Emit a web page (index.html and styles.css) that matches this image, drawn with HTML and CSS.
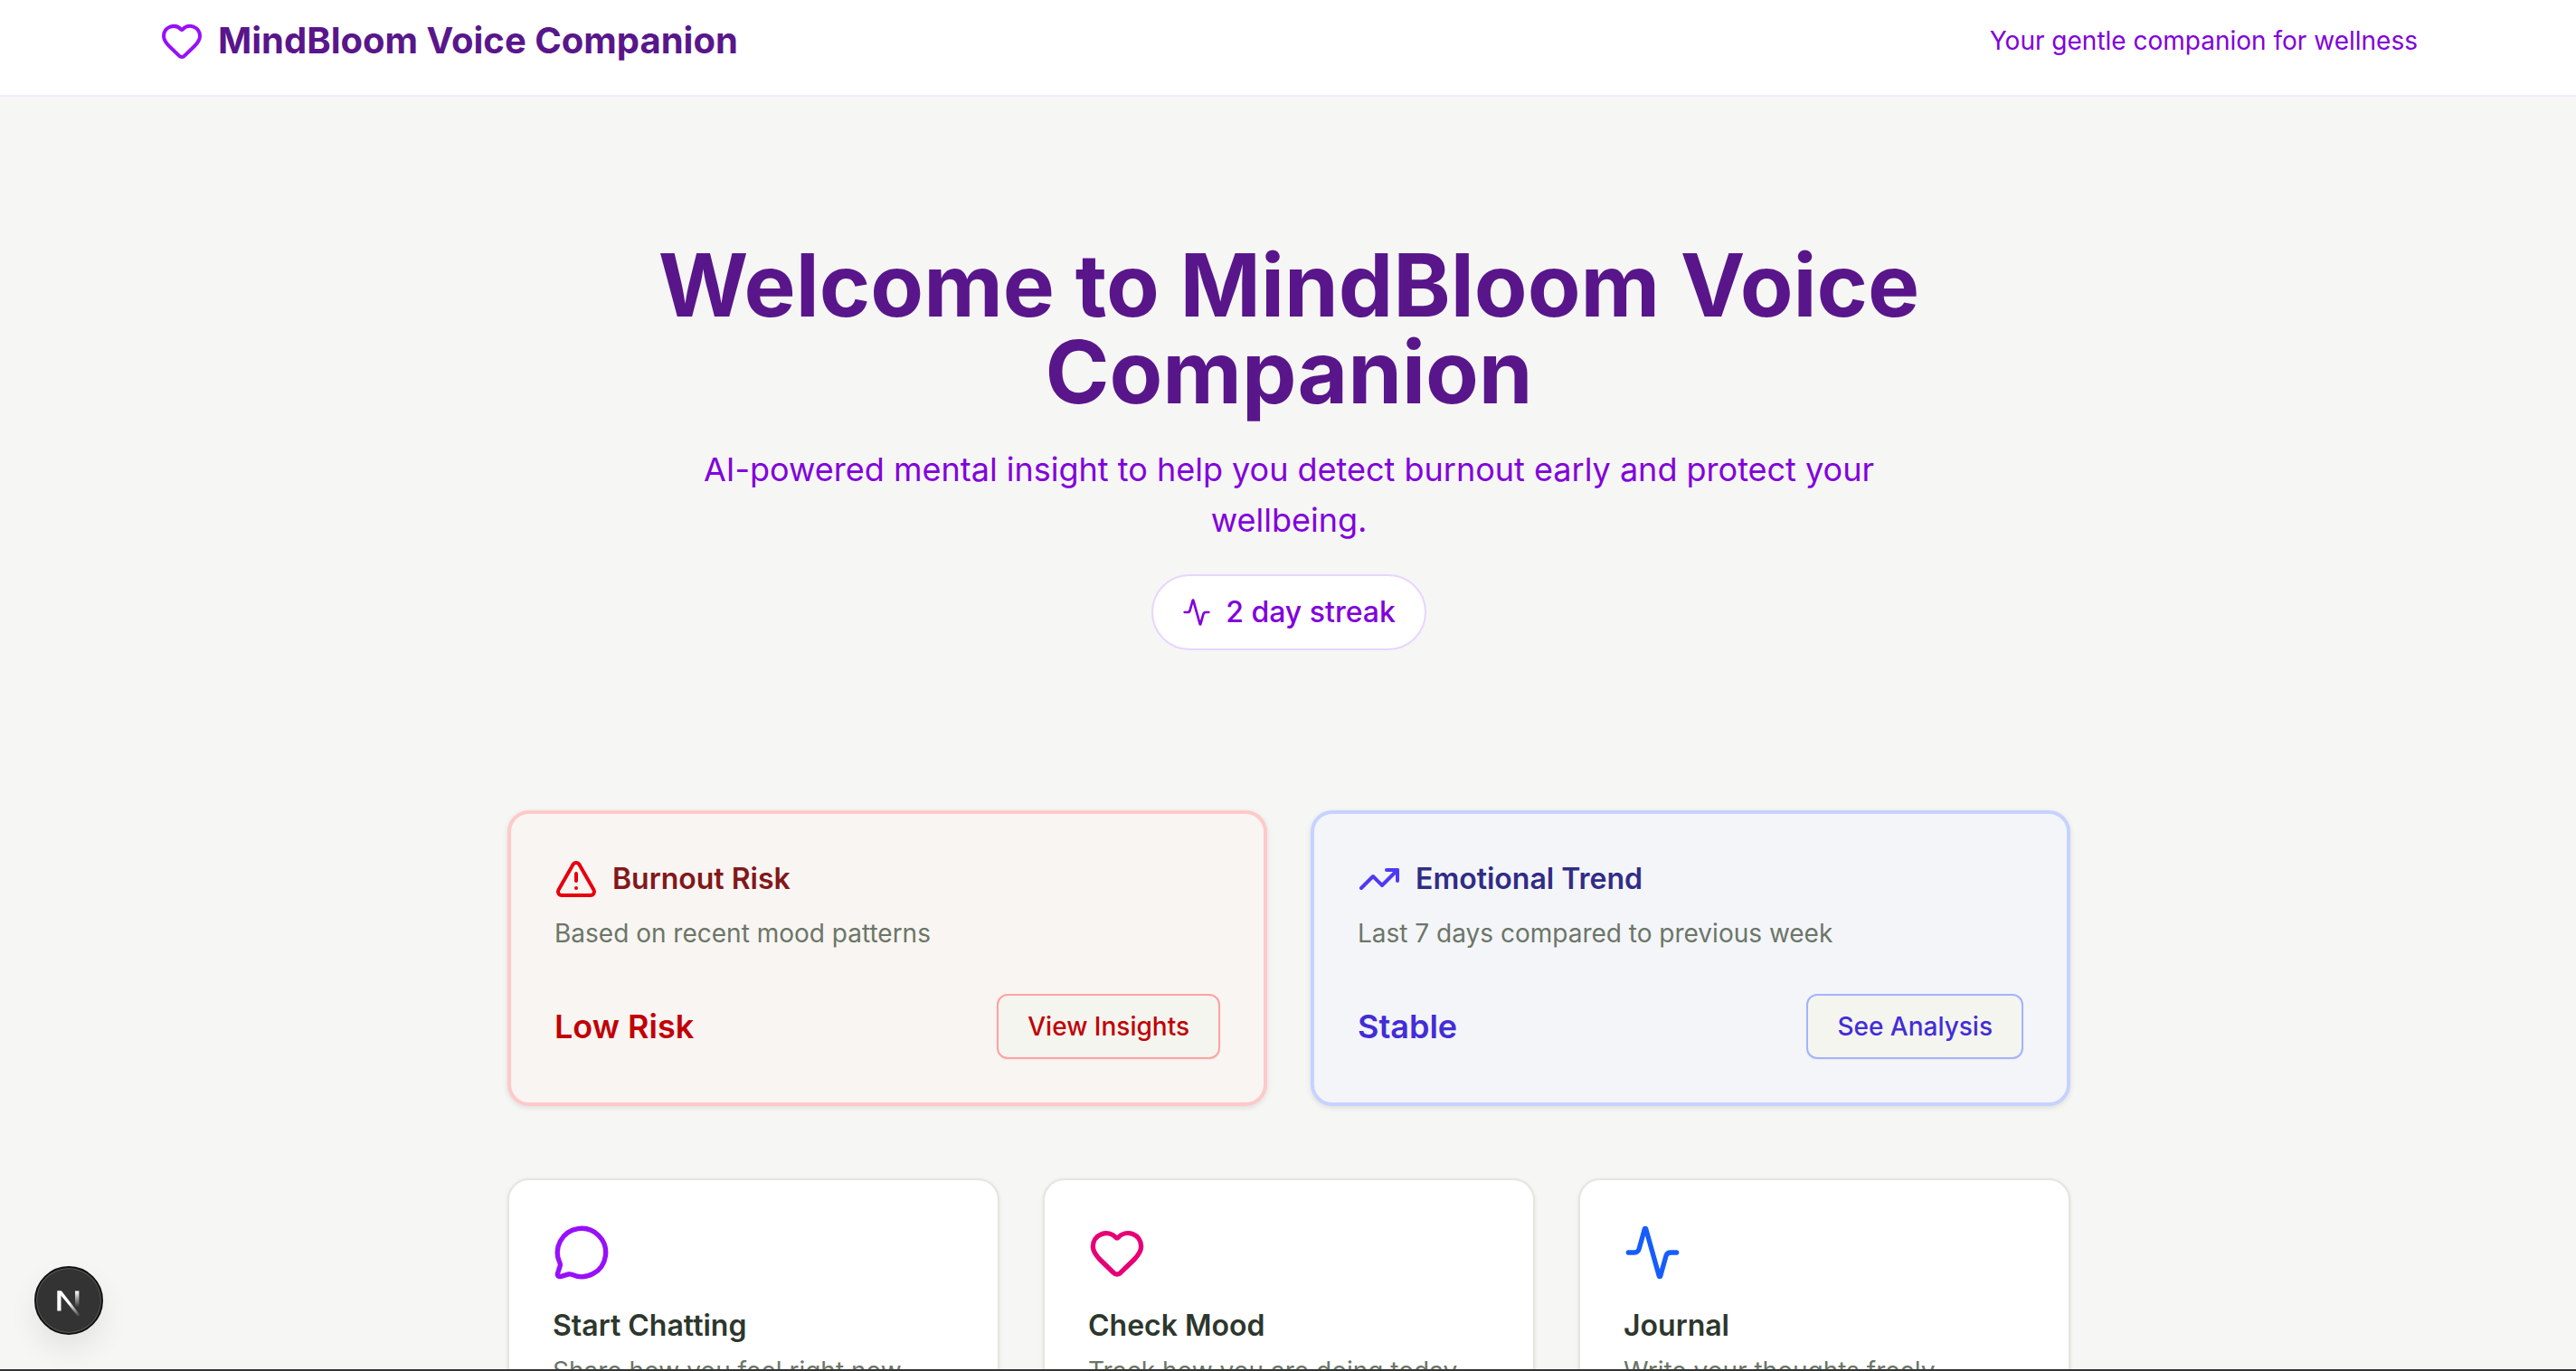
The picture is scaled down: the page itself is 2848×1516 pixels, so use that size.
FILE: index.html
```html
<!DOCTYPE html>
<html lang="en">
<head>
    <meta charset="UTF-8">
    <meta name="viewport" content="width=device-width, initial-scale=1.0">
    <title>MindBloom Voice Companion</title>
    <link rel="stylesheet" href="styles.css">
</head>
<body>
    <!-- Top bar -->
    <header class="topbar">
        <div class="topbar-inner">
            <div class="brand">
                <svg class="icon brand-icon" viewBox="0 0 24 24"><path d="M2 9.5a5.5 5.5 0 0 1 9.591-3.676.56.56 0 0 0 .818 0A5.49 5.49 0 0 1 22 9.5c0 2.29-1.5 4-3 5.5l-5.492 5.313a2 2 0 0 1-3 .019L5 15c-1.5-1.5-3-3.2-3-5.5"/></svg>
                <span class="brand-name">MindBloom Voice Companion</span>
            </div>
            <p class="tagline">Your gentle companion for wellness</p>
        </div>
    </header>

    <main class="page">
        <!-- Welcome section -->
        <section class="hero">
            <h1>Welcome to MindBloom Voice Companion</h1>
            <p class="hero-text">AI-powered mental insight to help you detect burnout early and protect your wellbeing.</p>
            <div class="streak">
                <svg class="icon streak-icon" viewBox="0 0 24 24"><path d="M22 12h-2.48a2 2 0 0 0-1.93 1.46l-2.35 8.36a.25.25 0 0 1-.48 0L9.24 2.18a.25.25 0 0 0-.48 0l-2.35 8.36A2 2 0 0 1 4.49 12H2"/></svg>
                <span>2 day streak</span>
            </div>
        </section>

        <!-- Insight cards -->
        <section class="insights">
            <div class="insight insight-red">
                <div class="insight-head">
                    <svg class="icon insight-icon" viewBox="0 0 24 24"><path d="m21.73 18-8-14a2 2 0 0 0-3.48 0l-8 14A2 2 0 0 0 4 21h16a2 2 0 0 0 1.73-3"/><path d="M12 9v4"/><path d="M12 17h.01"/></svg>
                    <h2>Burnout Risk</h2>
                </div>
                <p class="insight-text">Based on recent mood patterns</p>
                <div class="insight-foot">
                    <span class="insight-value">Low Risk</span>
                    <button class="insight-button">View Insights</button>
                </div>
            </div>
            <div class="insight insight-indigo">
                <div class="insight-head">
                    <svg class="icon insight-icon" viewBox="0 0 24 24"><path d="M16 7h6v6"/><path d="m22 7-8.5 8.5-5-5L2 17"/></svg>
                    <h2>Emotional Trend</h2>
                </div>
                <p class="insight-text">Last 7 days compared to previous week</p>
                <div class="insight-foot">
                    <span class="insight-value">Stable</span>
                    <button class="insight-button">See Analysis</button>
                </div>
            </div>
        </section>

        <!-- Action cards -->
        <section class="actions">
            <div class="action">
                <svg class="icon action-icon icon-purple" viewBox="0 0 24 24"><path d="M2.992 16.342a2 2 0 0 1 .094 1.167l-1.065 3.29a1 1 0 0 0 1.236 1.168l3.413-.998a2 2 0 0 1 1.099.092 10 10 0 1 0-4.777-4.719"/></svg>
                <h3>Start Chatting</h3>
                <p>Share how you feel right now</p>
            </div>
            <div class="action">
                <svg class="icon action-icon icon-pink" viewBox="0 0 24 24"><path d="M2 9.5a5.5 5.5 0 0 1 9.591-3.676.56.56 0 0 0 .818 0A5.49 5.49 0 0 1 22 9.5c0 2.29-1.5 4-3 5.5l-5.492 5.313a2 2 0 0 1-3 .019L5 15c-1.5-1.5-3-3.2-3-5.5"/></svg>
                <h3>Check Mood</h3>
                <p>Track how you are doing today</p>
            </div>
            <div class="action">
                <svg class="icon action-icon icon-blue" viewBox="0 0 24 24"><path d="M22 12h-2.48a2 2 0 0 0-1.93 1.46l-2.35 8.36a.25.25 0 0 1-.48 0L9.24 2.18a.25.25 0 0 0-.48 0l-2.35 8.36A2 2 0 0 1 4.49 12H2"/></svg>
                <h3>Journal</h3>
                <p>Write your thoughts freely</p>
            </div>
        </section>
    </main>

    <!-- Dev indicator, sits over the page -->
    <div class="dev-badge">
        <svg class="dev-logo" viewBox="0 0 32 32" width="32" height="32">
            <defs>
                <linearGradient id="nFade" x1="0" y1="0" x2="1" y2="1">
                    <stop offset="0.5" stop-color="#fff"/>
                    <stop offset="1" stop-color="#fff" stop-opacity="0"/>
                </linearGradient>
                <linearGradient id="nBar" x1="0" y1="0" x2="0" y2="1">
                    <stop offset="0" stop-color="#fff"/>
                    <stop offset="0.85" stop-color="#fff" stop-opacity="0"/>
                </linearGradient>
            </defs>
            <rect x="3.3" y="5.5" width="4.2" height="22" fill="#fff"/>
            <path d="M3.3 5.5H8L28.5 32 26.5 34Z" fill="url(#nFade)"/>
            <rect x="23" y="5.5" width="4.4" height="21" fill="url(#nBar)"/>
        </svg>
    </div>
    <div class="window-edge"></div>
</body>
</html>
```

FILE: styles.css
```css
html, body {
    height: 100%;
}

body {
    margin: 0;
    padding-left: 2px;
    overflow: hidden;
    background-color: #f6f6f4;
    font-family: Inter, "Liberation Sans", sans-serif;
}

h1, h2, h3, p {
    margin: 0;
}

.icon {
    display: block;
    flex-shrink: 0;
    fill: none;
    stroke: currentColor;
    stroke-width: 2;
    stroke-linecap: round;
    stroke-linejoin: round;
}

/* Top bar */
.topbar {
    margin-left: -2px;
    padding-left: 2px;
    background-color: #ffffff;
    border-bottom: 2px solid #f3e8ff;
}

.topbar-inner {
    max-width: 2560px;
    margin: 0 auto;
    padding: 17px 32px 32px;
    display: flex;
    align-items: center;
    justify-content: space-between;
    box-sizing: border-box;
}

.brand {
    display: flex;
    align-items: center;
    gap: 16px;
}

.brand-icon {
    width: 48px;
    height: 48px;
    color: #9810fa;
}

.brand-name {
    font-size: 40px;
    line-height: 56px;
    font-weight: 700;
    color: #59168b;
}

.tagline {
    font-size: 28px;
    line-height: 40px;
    color: #8200db;
}

/* Page column */
.page {
    max-width: 1792px;
    margin: 0 auto;
    padding: 160px 32px 0;
    box-sizing: border-box;
}

/* Welcome section */
.hero {
    display: flex;
    flex-direction: column;
    align-items: center;
    text-align: center;
}

.hero h1 {
    font-size: 96px;
    line-height: 96px;
    font-weight: 700;
    color: #59168b;
    margin-bottom: 32px;
}

.hero-text {
    max-width: 1344px;
    font-size: 36px;
    line-height: 56px;
    color: #8200db;
    margin-bottom: 32px;
}

.streak {
    display: flex;
    align-items: center;
    gap: 16px;
    padding: 20px 32px;
    background-color: #ffffff;
    border: 2px solid #e9d4ff;
    border-radius: 999px;
    font-size: 32px;
    line-height: 40px;
    font-weight: 500;
    color: #8200db;
}

.streak-icon {
    width: 32px;
    height: 32px;
}

/* Insight cards */
.insights {
    display: grid;
    grid-template-columns: 1fr 1fr;
    gap: 48px;
    margin-top: 177px;
}

.insight {
    padding: 48px;
    border: 4px solid;
    border-radius: 24px;
    box-shadow: 0 2px 6px rgba(0, 0, 0, 0.1);
}

.insight-red {
    background-color: #f9f5f2;
    border-color: #ffc9c9;
}

.insight-indigo {
    background-color: #f4f5f9;
    border-color: #c6d2ff;
}

.insight-head {
    display: flex;
    align-items: center;
    gap: 16px;
    height: 44px;
    margin-top: 2px;
}

.insight-icon {
    width: 48px;
    height: 48px;
}

.insight h2 {
    font-size: 32px;
    line-height: 44px;
    font-weight: 600;
}

.insight-text {
    margin-top: 18px;
    font-size: 28px;
    line-height: 40px;
    color: #6b7668;
}

.insight-foot {
    display: flex;
    align-items: center;
    justify-content: space-between;
    margin-top: 47px;
}

.insight-value {
    font-size: 36px;
    font-weight: 600;
}

.insight-button {
    height: 72px;
    padding: 0 32px;
    background-color: #f4f5ee;
    border: 2px solid;
    border-radius: 12px;
    font-family: inherit;
    font-size: 28px;
    font-weight: 500;
    box-shadow: 0 1px 2px rgba(0, 0, 0, 0.05);
}

.insight-red .insight-icon { color: #e7000b; }
.insight-red h2 { color: #82181a; }
.insight-red .insight-value { color: #c10007; }
.insight-red .insight-button { color: #c10007; border-color: #ffa2a2; }

.insight-indigo .insight-icon { color: #4f39f6; }
.insight-indigo h2 { color: #312c85; }
.insight-indigo .insight-value { color: #432dd7; }
.insight-indigo .insight-button { color: #432dd7; border-color: #a3b3ff; }

/* Action cards */
.actions {
    display: grid;
    grid-template-columns: repeat(3, 1fr);
    gap: 48px;
    margin-top: 80px;
}

.action {
    height: 400px;
    padding: 48px;
    background-color: #ffffff;
    border: 2px solid #e3e7dd;
    border-radius: 24px;
    box-shadow: 0 1px 4px rgba(0, 0, 0, 0.08);
}

.action-icon {
    width: 64px;
    height: 64px;
}

.icon-purple { color: #9810fa; }
.icon-pink { color: #e60076; }
.icon-blue { color: #155dfc; }

.action h3 {
    margin-top: 25px;
    font-size: 32px;
    line-height: 48px;
    font-weight: 600;
    color: #2d372d;
}

.action p {
    margin-top: 6px;
    font-size: 28px;
    line-height: 40px;
    color: #6b7668;
}

/* Dev indicator */
.dev-badge {
    position: fixed;
    left: 38px;
    bottom: 40px;
    width: 76px;
    height: 76px;
    display: flex;
    align-items: center;
    justify-content: center;
    box-sizing: border-box;
    background-color: #333333;
    border: 2px solid #111111;
    border-radius: 50%;
    box-shadow: inset 0 0 0 1px rgba(255, 255, 255, 0.2), 0 16px 32px rgba(0, 0, 0, 0.08);
}

.dev-logo {
    overflow: visible;
}

.window-edge {
    position: fixed;
    left: 0;
    right: 0;
    bottom: 0;
    height: 2px;
    background-color: #333333;
}
```
